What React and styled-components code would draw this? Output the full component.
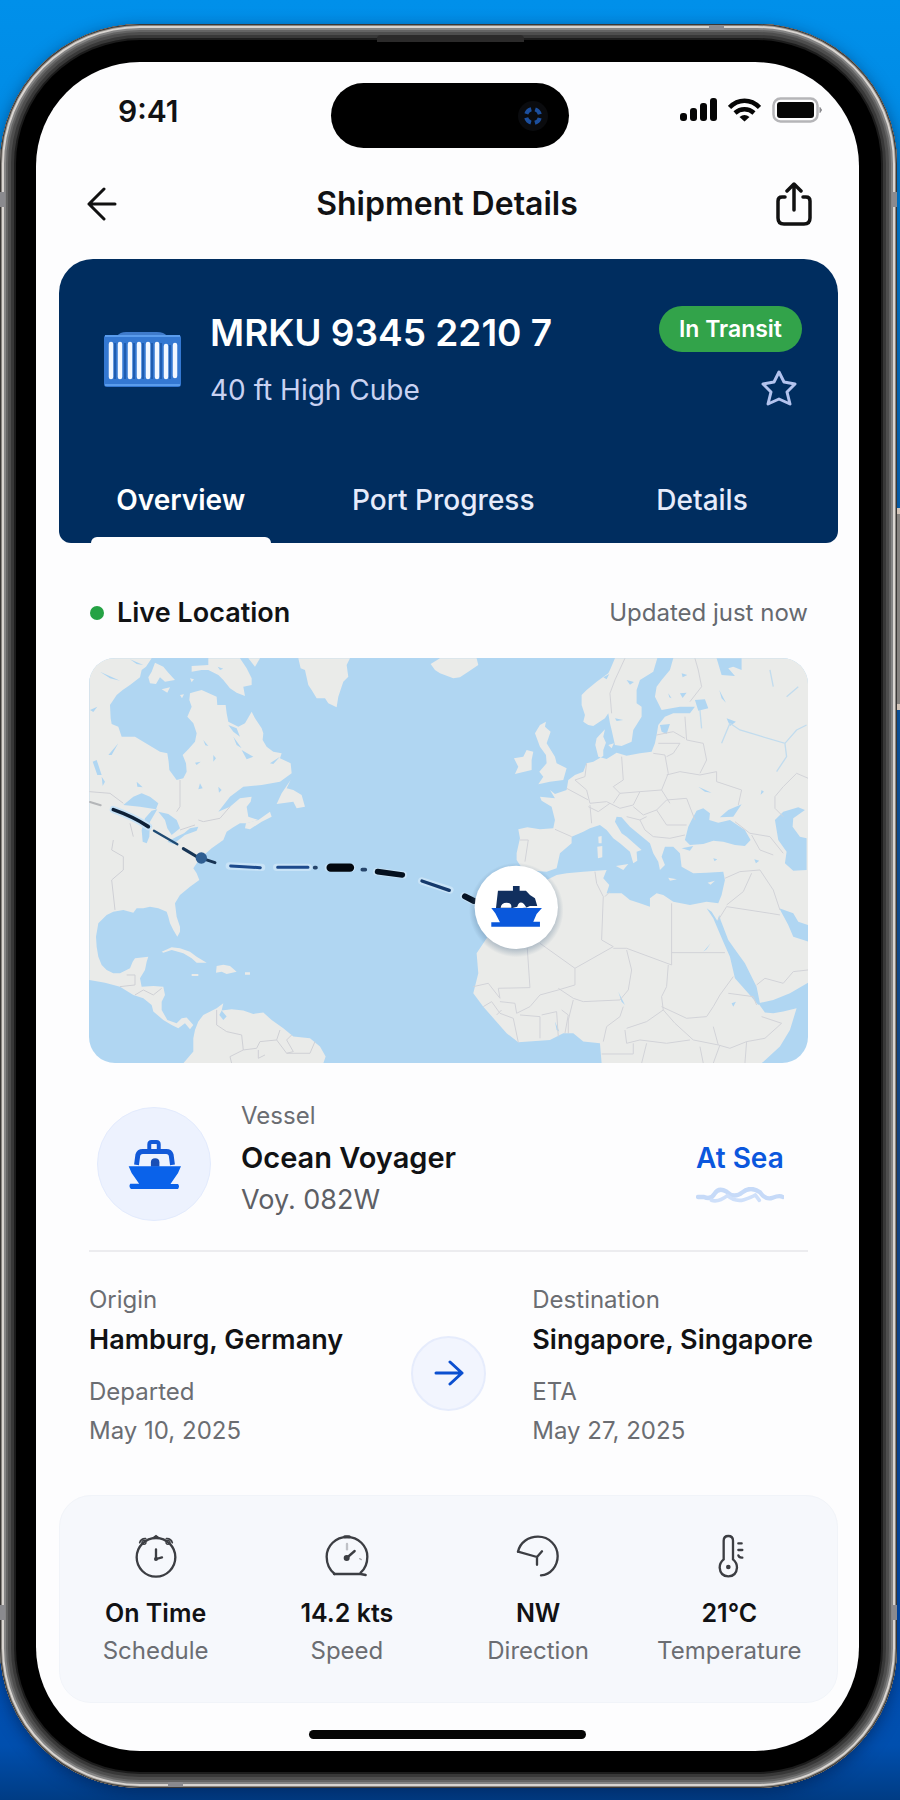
import { useState } from "react";
import styled, { createGlobalStyle } from "styled-components";

const GlobalStyle = createGlobalStyle`
  * {
    box-sizing: border-box;
  }
  body {
    margin: 0;
    font-family: Inter, "Liberation Sans", sans-serif;
    color: #111214;
    background: #0050b0;
  }
  button {
    border: none;
    padding: 0;
    background: none;
    font: inherit;
    color: inherit;
    cursor: pointer;
  }
  h1, h2, p {
    margin: 0;
  }
  svg {
    display: block;
  }
`;

const Page = styled.div`
  min-height: 100vh;
  padding: 24px 3px 12px 0;
  overflow: hidden;
  background: linear-gradient(
    180deg,
    #0090ea 0%,
    #0088e2 12%,
    #0a62b4 35%,
    #1a5090 65%,
    #0050b6 90%,
    #004fae 97%,
    #003c84 100%
  );
`;

const Phone = styled.div`
  position: relative;
  padding: 38px 38px 37px 36px;
  border-radius: 140px;
  background: #000;
  box-shadow:
    inset 0 0 0 1px #3a3836,
    inset 0 0 0 2px #8a8681,
    inset 0 0 0 4px #d9d5d1,
    inset 0 0 0 6px #858585,
    inset 0 0 0 8px #646464,
    inset 0 0 0 11px #4e4e4e,
    inset 0 0 0 14px #383838,
    inset 0 0 0 16px #1c1c1c,
    0 4px 16px rgba(0, 20, 60, 0.5);
`;

const Band = styled.span`
  position: absolute;
  background: #8a8a8e;
  width: ${(p) => (p.$side ? "5px" : "15px")};
  height: ${(p) => (p.$side ? "15px" : "5px")};
  top: ${(p) => p.$top};
  right: ${(p) => p.$right};
  bottom: ${(p) => p.$bottom};
  left: ${(p) => p.$left};
`;

const Speaker = styled.span`
  position: absolute;
  top: 11px;
  left: 42%;
  width: 147px;
  height: 7px;
  border-radius: 4px 4px 0 0;
  background: #2b2a2a;
`;

const SideButton = styled.span`
  position: absolute;
  top: 484px;
  right: -3px;
  width: 3px;
  height: 202px;
  border: solid #d3c4b8;
  border-width: 6px 0;
  background: #85827f;
`;

const Screen = styled.main`
  overflow: hidden;
  border-radius: 104px;
  background: #fdfdfe;
`;

const StatusBar = styled.div`
  height: 107px;
  padding: 0 36px 0 40px;
  display: grid;
  grid-template-columns: 1fr 238px 1fr;
  align-items: center;
`;

const Time = styled.span`
  padding: 0 0 9px 42px;
  font-size: 30px;
  font-weight: 600;
`;

const Island = styled.div`
  height: 65px;
  padding-right: 20px;
  border-radius: 33px;
  background: #000;
  display: flex;
  align-items: center;
  justify-content: flex-end;
`;

const StatusIcons = styled.div`
  display: flex;
  align-items: center;
  justify-content: flex-end;
  gap: 11px;
  padding-bottom: 11px;
`;

const Header = styled.header`
  height: 69px;
  margin-bottom: 21px;
  padding: 0 47px 0 50px;
  display: flex;
  align-items: center;
  justify-content: space-between;
`;

const Title = styled.h1`
  font-size: 32px;
  font-weight: 600;
`;

const Card = styled.section`
  margin: 0 21px 0 23px;
  padding-top: 47px;
  border-radius: 34px 34px 12px 12px;
  background: #002d5f;
  color: #fff;
`;

const CardTop = styled.div`
  display: flex;
  align-items: flex-start;
  padding: 0 36px 0 44px;
`;

const BoxIcon = styled.div`
  padding-top: 25px;
  margin-right: 28px;
`;

const CardText = styled.div`
  flex: 1;
`;

const Code = styled.h2`
  font-size: 37px;
  font-weight: 600;
  line-height: 54px;
`;

const BoxType = styled.p`
  font-size: 28px;
  line-height: 60px;
  color: #c9d2f2;
`;

const CardSide = styled.div`
  display: flex;
  flex-direction: column;
  align-items: flex-end;
  gap: 18px;
`;

const Badge = styled.span`
  padding: 0 20px;
  border-radius: 24px;
  background: #32a34a;
  font-size: 23px;
  font-weight: 600;
  line-height: 46px;
`;

const StarButton = styled.button`
  margin-right: 5px;
`;

const Tabs = styled.div`
  display: grid;
  grid-template-columns: 32fr 37fr 31fr;
  padding-right: 18px;
  margin-top: 29px;
`;

const Tab = styled.button`
  position: relative;
  height: 94px;
  padding-top: 8px;
  font-size: 28px;
  font-weight: ${(p) => (p.$active ? 600 : 500)};
  color: ${(p) => (p.$active ? "#fff" : "#e6ebfb")};

  &::after {
    content: "";
    display: ${(p) => (p.$active ? "block" : "none")};
    position: absolute;
    bottom: 0;
    left: calc(50% - 90px);
    width: 180px;
    height: 6px;
    border-radius: 6px 6px 0 0;
    background: #fdfdfe;
  }
`;

const Body = styled.div`
  padding: 54px 51px 0 53px;
`;

const SectionHead = styled.div`
  display: flex;
  align-items: center;
  margin-bottom: 29px;
  line-height: 32px;
`;

const Dot = styled.span`
  width: 14px;
  height: 14px;
  margin: 0 13px 0 1px;
  border-radius: 50%;
  background: #25a244;
`;

const SectionTitle = styled.h2`
  flex: 1;
  font-size: 27px;
  font-weight: 600;
`;

const Updated = styled.span`
  font-size: 24px;
  color: #66696f;
`;

const MapFrame = styled.div`
  overflow: hidden;
  border-radius: 26px;

  svg {
    width: 100%;
    height: auto;
  }
`;

const Vessel = styled.section`
  display: flex;
  align-items: flex-end;
  gap: 30px;
  padding: 32px 24px 29px 8px;
  border-bottom: 2px solid #ececef;
`;

const VesselIcon = styled.div`
  width: 114px;
  height: 114px;
  border: 1px solid #e3ebfd;
  border-radius: 50%;
  background: #edf2fe;
  display: flex;
  align-items: center;
  justify-content: center;
`;

const VesselText = styled.div`
  flex: 1;
  line-height: 42px;
`;

const Label = styled.p`
  font-size: 24px;
  color: #6b6d72;
`;

const Strong = styled.p`
  font-size: ${(p) => p.$size || 27}px;
  font-weight: 600;
  color: ${(p) => p.$color || "#111214"};
  white-space: nowrap;
`;

const Voyage = styled.p`
  font-size: 27px;
  color: #5d5f65;
`;

const Sea = styled.div`
  padding-bottom: 16px;
  line-height: 42px;

  svg {
    margin-top: 8px;
  }
`;

const Route = styled.section`
  display: flex;
  align-items: center;
  margin-right: -5px;
  padding: 28px 0 45px;
`;

const Port = styled.div`
  flex: ${(p) => (p.$grow ? 1 : "none")};
  line-height: 40px;
`;

const PortDates = styled.div`
  margin-top: 12px;
  line-height: 39px;
`;

const RouteArrow = styled.div`
  width: 75px;
  height: 75px;
  margin: 16px 46px 0 0;
  border: 2px solid #e6ecfc;
  border-radius: 50%;
  background: #f2f5fe;
  display: flex;
  align-items: center;
  justify-content: center;
`;

const Stats = styled.section`
  display: grid;
  grid-template-columns: repeat(4, 1fr);
  margin: 0 21px 0 23px;
  padding: 38px 12px 33px 0;
  border: 1px solid #f1f4f9;
  border-radius: 32px;
  background: #f6f8fc;
`;

const Stat = styled.div`
  display: flex;
  flex-direction: column;
  align-items: center;
  line-height: 37px;

  svg {
    margin-bottom: 17px;
  }
`;

const HomeBar = styled.div`
  width: 277px;
  height: 9px;
  margin: 27px auto 12px;
  border-radius: 5px;
  background: #050505;
`;

const Camera = () => (
  <svg width="32" height="32" viewBox="0 0 32 32" fill="none">
    <circle cx="16" cy="16" r="15" fill="#0a0b0e" />
    <circle cx="16" cy="16" r="7" stroke="#1c4f9e" strokeWidth="4" strokeDasharray="7 4" strokeDashoffset="-2" />
  </svg>
);

const Signal = () => (
  <svg width="37" height="24" viewBox="0 0 37 24" fill="#050505">
    <rect x="0" y="15" width="7" height="8" rx="3" />
    <rect x="10" y="10" width="7" height="13" rx="3" />
    <rect x="20" y="5" width="7" height="18" rx="3" />
    <rect x="30" y="0" width="7" height="23" rx="3" />
  </svg>
);

const Wifi = () => (
  <svg width="33" height="24" viewBox="0 0 33 24" fill="none" stroke="#050505" strokeWidth="4.500">
    <path d="M1.5 9.5c8.500-9 21.500-9 30 0" />
    <path d="M7 15c5.500-5 13.500-5 19 0" />
    <path d="M16.500 23.500l-5-4.500q5-4 10 0z" fill="#050505" stroke="none" />
  </svg>
);

const Battery = () => (
  <svg width="51" height="26" viewBox="0 0 51 26" fill="none">
    <rect x="1.500" y="1.500" width="44" height="23" rx="7" stroke="#b5b5b8" strokeWidth="2.500" />
    <rect x="5" y="5" width="37" height="16" rx="3" fill="#050505" />
    <path d="M48 10.500q3 2.500 0 5z" fill="#8b8b8f" stroke="#8b8b8f" />
  </svg>
);

const BackIcon = () => (
  <svg width="32" height="34" viewBox="0 0 32 34" fill="none" stroke="#111" strokeWidth="3" strokeLinecap="round" strokeLinejoin="round">
    <path d="M29 17H3M18 2L3 17l15 15" />
  </svg>
);

const ShareIcon = () => (
  <svg width="36" height="44" viewBox="0 0 36 44" fill="none" stroke="#111" strokeWidth="3.500" strokeLinecap="round" strokeLinejoin="round">
    <path d="M18 28V3M11 9l7-7 7 7" />
    <path d="M9 15H6q-4 0-4 4v17q0 6 6 6h20q6 0 6-6V19q0-4-4-4h-3" />
  </svg>
);

const ContainerIcon = () => (
  <svg width="79" height="57" viewBox="0 0 79 57">
    <path d="M14 5Q17 1 23 1H54Q61 1 64 5z" fill="#3f7bcb" />
    <rect x="1" y="4" width="77" height="52" rx="3" fill="#3478d2" />
    <path d="M2 5H77M2 54H77" stroke="#5a9cec" strokeWidth="2" />
    <path
      d="M8 13V46M17 13V46M27 13V46M36 13V46M45 13V46M54 13V46M63 15V46M72 14V45"
      stroke="#f2f7ff"
      strokeWidth="4.500"
      strokeLinecap="round"
    />
    <path d="M12 12V48M22 12V48M31 12V48M40 12V48M49 12V48M58 12V48M67 14V48" stroke="#1f5cb0" strokeWidth="2" />
  </svg>
);

const StarIcon = () => (
  <svg width="36" height="36" viewBox="0 0 36 36" fill="none" stroke="#b3c3ee" strokeWidth="3" strokeLinejoin="round">
    <path d="M18 2l5 10 11 2-8 8 3 12-11-5-11 5 3-12-8-8 11-2z" />
  </svg>
);

const ShipIcon = () => (
  <svg width="53" height="51" viewBox="203 205 162 156" fill="none">
    <path d="M268 242V222Q268 214 275 214H290Q297 214 297 222V242" stroke="#1259d8" strokeWidth="12" />
    <path d="M229 284L233 254Q236 243 248 243H320Q332 243 335 254L339 284" stroke="#1259d8" strokeWidth="15" />
    <path d="M273 290V276Q273 264 286 264T299 276V290z" fill="#1a4fb5" />
    <path d="M205 288H365L356 309L333 343H356Q362 350 356 358H212Q204 350 210 342H237L214 309z" fill="#0a62ea" />
  </svg>
);

const Waves = () => (
  <svg width="88" height="18" viewBox="766 350 264 54" fill="none" strokeLinecap="round" strokeLinejoin="round">
    <path d="M772 380H790Q810 390 822 370T858 364Q880 386 905 366T958 366Q975 390 996 382T1026 380" stroke="#c6daf8" strokeWidth="13" />
    <path d="M812 390Q835 396 860 376Q885 396 910 388T944 374L956 390" stroke="#cfe0fa" strokeWidth="11" />
  </svg>
);

const ArrowIcon = () => (
  <svg width="30" height="26" viewBox="0 0 30 26" fill="none" stroke="#0b4fd0" strokeWidth="3" strokeLinecap="round" strokeLinejoin="round">
    <path d="M2 13H28M16 2l12 11-12 11" />
  </svg>
);

const ClockIcon = () => (
  <svg width="44" height="44" viewBox="395 192 132 132" fill="none" stroke="#3c3e43" strokeWidth="7" strokeLinecap="round">
    <circle cx="461" cy="262" r="58" />
    <path d="M461 238V267L479 262" />
    <circle cx="461" cy="267" r="6" fill="#3c3e43" stroke="none" />
    <path d="M412 218Q416 205 430 206M510 218Q506 205 492 206" strokeWidth="5" />
    <path d="M450 205L461 197L472 205z" fill="#3c3e43" strokeWidth="4" />
    <circle cx="425" cy="217" r="6" strokeWidth="4" />
    <circle cx="497" cy="217" r="6" strokeWidth="4" />
  </svg>
);

const SpeedIcon = () => (
  <svg width="44" height="44" viewBox="977 194 132 132" fill="none" stroke="#3c3e43" strokeWidth="7" strokeLinecap="round">
    <path d="M1006 314Q982 294 982 262A61 59 0 0 1 1104 262Q1104 292 1084 310" />
    <path d="M1004 314H1084L1099 317" />
    <path d="M1043 224V240" stroke="#bfc1c6" />
    <path d="M1042 266L1066 245" strokeWidth="7" />
    <circle cx="1042" cy="266" r="9" fill="#3c3e43" stroke="none" />
    <path d="M1081 268L1086 271" stroke="#a9abb0" strokeWidth="4" />
    <path d="M1036 202H1050" strokeWidth="9" />
  </svg>
);

const DirectionIcon = () => (
  <svg width="44" height="44" viewBox="209 194 132 132" fill="none" stroke="#3c3e43" strokeWidth="7" strokeLinecap="round" strokeLinejoin="round">
    <path d="M215 247C222 218 247 202 275 202C309 202 334 229 334 260C334 290 313 316 284 318" />
    <path d="M215 247L272 263V286M272 263L287 246" />
  </svg>
);

const TempIcon = () => (
  <svg width="44" height="44" viewBox="774 194 132 132" fill="none" stroke="#3c3e43" strokeWidth="7" strokeLinecap="round">
    <path d="M824 270V214Q824 200 838 200T852 214V270Q864 280 864 295Q862 321 838 321T812 295Q812 280 824 270z" />
    <circle cx="838" cy="293" r="7" fill="#3c3e43" stroke="none" />
    <path d="M868 222H878M868 242H880M868 258Q870 266 880 265" />
  </svg>
);

// land, water and border outlines share one grid; the old world starts 1080 units in
const WEST_LAND = [
  "M28 205H215L198 230 185 240 180 262 150 285 128 300 110 315 90 345 92 385 95 402 115 410 125 440 165 440 190 455 215 470 240 485 262 490 266 515 268 540 290 570 310 565 320 545 318 520 308 495 325 478 345 455 350 430 340 400 322 380 335 350 328 330 330 310 345 305 365 300 410 320 412 345 437 345 440 370 445 395 475 410 495 400 515 365 525 385 545 415 550 430 548 450 560 470 580 485 605 490 600 505 632 520 635 550 600 575 545 585 490 590 450 620 415 665 450 650 480 625 515 620 512 635 500 650 505 680 535 690 500 700 480 700 460 712 440 725 430 750 395 775 378 790 365 800 350 820 340 835 350 850 358 870 330 890 300 915 285 940 290 980 300 1010 300 1025 292 1040 280 1020 270 1000 265 980 260 965 235 955 210 950 190 955 170 955 160 968 130 960 100 965 80 975 55 1000 48 1040 50 1070 55 1100 65 1125 80 1140 100 1150 120 1150 150 1135 158 1115 165 1105 205 1100 200 1115 195 1140 180 1165 185 1190 220 1188 250 1190 255 1215 245 1235 245 1260 262 1290 290 1300 305 1285 320 1283 340 1305 330 1318 315 1300 295 1315 275 1305 250 1290 220 1265 215 1245 190 1225 160 1215 120 1190 75 1178 28 1170Z",
  "M225 218L250 230 265 248 285 270 255 275 240 262 228 282 210 280 205 262 215 245Z",
  "M385 205H480L500 235 515 265 515 285 490 290 495 318 470 308 450 295 430 270 415 255 385 240 365 240 335 245V228L385 225Z",
  "M505 205H540L525 230Z",
  "M655 205H810L800 225 805 260 790 275 785 290 775 320 770 352 745 340 735 325 710 325 695 300 685 285 675 240 662 235Z",
  "M632 570L620 595 640 600 665 615 675 650 650 655 640 635 590 642 605 610Z",
  "M570 665L575 680 545 695 510 718 495 715 498 700 535 690Z",
  "M245 1085L275 1072 300 1075 330 1085 350 1100 380 1118 350 1118 335 1105 310 1090 275 1080 250 1088Z",
  "M410 1128L430 1124 450 1128 470 1145 440 1152 425 1145 408 1148Z",
  "M335 1152H355V1158H335ZM495 1147H510V1154H495ZM245 298L270 292 262 308ZM300 315L312 313 306 325ZM330 265L342 268 335 277Z",
  "M310 1420L340 1385 340 1345 345 1320 355 1295 370 1275 410 1255 430 1240 425 1262 455 1258 490 1262 520 1272 550 1268 575 1290 610 1315 640 1340 690 1345 720 1370 737 1400 730 1420Z",
];

const EAST_LAND = [
  "M525 205L510 240 505 250 470 275 440 300 425 315 425 345 435 375 430 395 445 405 460 408 495 385 505 370 510 400 515 420 525 465 545 468 575 455 580 420 605 380 605 350 590 340 590 300 600 270 640 245 652 205H700L690 240 665 270 650 290 645 320 665 360 720 350 765 350 750 370 700 370 675 380 655 405 650 435 645 460 635 485 600 490 560 497 530 488 500 507 475 500 466 465 470 445 495 418 490 440 498 458 490 480 490 498 460 515 440 520 430 545 405 555 385 570 380 600 345 612 330 600 345 625 300 620 305 632 335 650 345 690 340 715 300 718 262 712 235 718 240 745 230 790 230 810 250 840 320 845 350 835 360 790 395 760 395 740 430 725 450 715 480 705 500 720 520 745 540 760 570 785 580 820 592 812 590 785 605 780 560 740 545 730 525 695 530 680 545 682 570 710 600 735 630 760 640 790 655 815 660 840 675 825 665 800 675 770 700 770 720 790 725 830 760 850 800 848 850 845 855 870 845 915 835 940 800 935 750 945 700 935 670 915 650 910 630 925 630 950 600 940 570 930 545 910 500 910 508 885 490 865 500 840 430 845 380 850 350 855 320 870 250 900 210 960 150 1030 110 1090 115 1150 100 1210 130 1250 165 1290 200 1330 235 1357 330 1350 370 1330 400 1330 430 1355 480 1360 485 1420H965L1020 1370 1050 1320 1070 1255 1030 1265 1000 1270 975 1268 955 1240 1000 1230 1050 1210 1105 1178V205Z",
  "M-28 222L0 205H110L115 225 85 245 60 262 40 265 0 250 -15 240Z",
  "M300 405L318 395 315 410 332 425 320 460 345 500 350 520 380 535 370 570 330 575 295 583 310 560 298 545 320 520 318 495 300 470 285 430Z",
  "M260 480L280 485 275 510 275 540 225 552 235 530 222 505 250 500Z",
  "M475 740L485 738V760H476ZM472 770L487 768V802L474 805ZM528 828L565 822 550 840ZM685 863L711 868 690 872ZM803 878L825 872 812 884ZM505 465L522 460 515 475Z",
];

const WEST_WATER = [
  "M130 645L160 620 185 610 210 620 235 640 228 658 180 650Z",
  "M188 755L185 720 195 685 215 662 232 658 210 695 208 740 200 760Z",
  "M235 665L265 672 290 690 300 715 275 735 262 715 255 690Z",
  "M262 755L290 740 312 730 330 715 355 710 350 722 315 735 280 762Z",
  "M38 515L50 510 65 555 52 555ZM65 560L75 575 68 588ZM30 360L52 350 40 366ZM85 495L115 460 95 495ZM150 208L190 225 170 222ZM60 245L120 272 90 265ZM345 518L362 515 350 525ZM460 440L485 475 470 465ZM485 480L520 500 500 508ZM415 590L425 600 417 608ZM370 450L385 468 376 466ZM445 405L470 415 480 440 460 425ZM170 575L188 592 172 590ZM570 520L600 500 580 522ZM425 1262L440 1280 430 1290 418 1275ZM400 495L408 505 400 515ZM360 580L368 595 355 598ZM413 230L430 236 420 240Z",
];

const EAST_WATER = [
  "M735 750L745 710 755 690 770 662 790 655 810 670 808 690 835 698 870 690 915 720 932 750 915 768 885 765 850 755 820 752 790 762 750 765Z",
  "M840 682L865 660 905 643 880 680Z",
  "M725 775L760 768 750 782Z",
  "M1005 690L1030 665 1075 652 1095 660 1060 685 1058 710 1080 740 1100 745V840L1060 842 1035 820 1040 785 1015 750Z",
  "M800 955L820 985 850 1055 870 1100 885 1165 925 1210 955 1245 960 1240 950 1190 915 1120 890 1085 865 1050 842 990 838 975 832 992 815 965Z",
  "M1018 955L1060 970 1075 995 1105 1005V1055L1060 1040 1045 1005Z",
  "M830 205H905V240L880 230 865 235 885 258 845 255Z",
  "M765 330L795 328 805 355 775 362ZM660 405L690 402 680 432 665 425ZM838 300L858 338 845 325ZM560 270L582 276 570 284ZM525 385L550 390 530 393ZM790 1085L812 1060 800 1078ZM535 1205L555 1245 545 1235ZM775 590L815 608 795 605ZM720 310L740 308 728 324ZM685 310L695 325 688 322ZM725 250L742 255 728 262ZM860 385L888 395 870 408ZM875 1240L888 1235 880 1250ZM345 1295L358 1325 350 1320ZM965 600L972 605 962 614ZM490 262L508 252 500 268ZM820 805L832 808 824 814ZM943 808L958 812 948 820Z",
];

const WEST_BORDERS =
  "M28 605L90 610 130 640M355 690L370 695 420 685 450 650M300 570V650L290 665M345 705L300 720M100 750L95 780 130 800V840L95 870 105 960M140 1155L165 1155V1185L120 1190M165 1215L190 1200 220 1215 245 1195M410 1260L410 1305 440 1325 485 1335 490 1380 450 1400 455 1420M490 1380L530 1375 540 1355 590 1350 600 1320M535 1380V1405L555 1395M590 1350L620 1390 640 1385 620 1350 635 1335M620 1390L690 1390 705 1355M150 700L160 740";

const EAST_BORDERS =
  "M555 205L525 270 510 310 515 370M765 205L775 240 785 290 750 335M735 380L740 450 790 460 800 510 780 550M650 435L700 425 735 445M655 460L720 460 700 490 680 500M640 490L675 495 685 550 665 600 690 640M680 555L720 545 780 555 830 545 830 575 905 600 895 645M545 500L550 570 520 590 540 610 600 605 665 600M440 520L435 560 405 570 440 600 450 640 500 635 540 655 580 645 600 605M380 595L445 630M450 645L455 700M540 610L520 640M580 650L610 675 650 660 680 630 740 625 765 690M650 660L680 705 740 705M560 680L600 690 615 720 640 740 690 745 735 735M345 718L395 740M240 750H265L255 815M600 690L620 680M445 650L475 665 510 640M1105 565L1070 550 1030 590 1005 620 1005 655 1030 680M885 695L930 730 990 740 1030 790M935 735L960 780 1000 795M855 865L900 845 960 840 1000 900 1020 960M860 945L910 905 935 850M860 950L990 970 1020 975M835 990L860 950M465 845L470 880 490 920 485 1050 520 1070 405 1135 300 1060M495 920L510 905M695 940V1125L560 1075 520 1075M695 1088H855M560 1080L575 1140 565 1200 540 1230 430 1235 400 1225 355 1195M685 1125L680 1190 665 1220 670 1260 620 1295 560 1315M100 1190L145 1180 180 1225 175 1195 270 1193 262 1075M355 1200L405 1185V1135M355 1200L300 1215 270 1250 230 1270 225 1240 180 1235M130 1250L155 1235 180 1270 220 1285 235 1357M170 1275L185 1260M240 1275L300 1280 300 1345M305 1275L350 1265 355 1340M365 1260L385 1275 375 1330M400 1230L385 1290 385 1330M490 1355L500 1310 540 1280 550 1250M555 1320L560 1360 600 1350 680 1360 750 1350M485 1392H580V1360M670 1260L705 1300 760 1350 835 1365 870 1375 920 1355 975 1345 1025 1300 965 1280M665 1250L740 1285 800 1280 820 1250 840 1215 880 1160M820 1310L835 1365M780 1370L790 1420M620 1360L605 1420M840 1365L820 1420M920 1355L915 1420M950 1185L975 1165 1030 1180 1060 1145 1105 1140M865 1210L940 1220 950 1245";

const RIVERS =
  "M870 400L900 420 950 435 1035 460 1070 420 1100 405M1035 460L1040 500 1010 545M870 400L845 460M990 240L1000 290M1040 320L1075 290M780 360L785 415";

const WorldMap = () => (
  <svg viewBox="0 0 719 405" role="img" aria-label="Vessel route over the Atlantic">
    <defs>
      <radialGradient id="markerShadow">
        <stop offset="0.8" stopColor="#4a6a88" stopOpacity="0.4" />
        <stop offset="1" stopColor="#4a6a88" stopOpacity="0" />
      </radialGradient>
    </defs>
    <rect width="719" height="405" fill="#b0d6f2" />
    <g transform="translate(-9 -68) scale(0.3333)">
      <g fill="#eaebe9">
        {WEST_LAND.map((d) => (
          <path key={d} d={d} />
        ))}
      </g>
      <g fill="#b0d6f2">
        {WEST_WATER.map((d) => (
          <path key={d} d={d} />
        ))}
      </g>
      <path d={WEST_BORDERS} fill="none" stroke="#cfd0d5" strokeWidth="3" />
      <g transform="translate(1080 0)">
        <g fill="#eaebe9">
          {EAST_LAND.map((d) => (
            <path key={d} d={d} />
          ))}
        </g>
        <g fill="#b0d6f2">
          {EAST_WATER.map((d) => (
            <path key={d} d={d} />
          ))}
        </g>
        <path d={EAST_BORDERS} fill="none" stroke="#d2d3d8" strokeWidth="3" strokeLinejoin="round" />
        <path d={RIVERS} fill="none" stroke="#c2dcee" strokeWidth="4" />
      </g>
      <g fill="none" strokeLinecap="round">
        <path
          d="M100 659Q160 680 205 710M448 828L545 832M590 832H685M745 833H815M890 845L970 855M1025 873L1110 900M1152 918L1182 935"
          stroke="#c8e3f7"
          strokeWidth="22"
        />
        <path d="M30 636L62 646" stroke="#b4b6b8" strokeWidth="6" />
        <path d="M100 659Q160 680 205 710" stroke="#0d2037" strokeWidth="11" />
        <path d="M222 722L292 763" stroke="#1f4a72" strokeWidth="7" />
        <path d="M310 776L350 800L405 818" stroke="#173454" strokeWidth="9" />
        <circle cx="364" cy="804" r="17" fill="#2f5e91" />
        <path d="M452 828Q500 831 541 833M593 832H684" stroke="#1c4a8c" strokeWidth="9" />
        <path d="M704 833H708M847 839H856" stroke="#26456b" strokeWidth="11" />
        <path d="M752 833H810" stroke="#03080f" strokeWidth="25" />
        <path d="M893 845L967 855" stroke="#04101e" strokeWidth="17" />
        <path d="M1026 873L1108 901" stroke="#15396b" strokeWidth="10" />
        <path d="M1155 919L1182 933" stroke="#061325" strokeWidth="18" />
      </g>
      <circle cx="1309" cy="960" r="142" fill="url(#markerShadow)" />
      <circle cx="1309" cy="952" r="125" fill="#fff" />
      <g transform="translate(1080 0)">
        <path d="M219 888H239V902H258L270 915 285 925 292 948H270L255 955 240 948 215 955H168L174 902H219Z" fill="#112f5e" />
        <path d="M182 953Q184 938 200 938T214 953ZM232 950Q238 930 252 942L260 953H232Z" fill="#fff" />
        <path d="M154 954H306L290 972 280 995H300V1010H154V997H180L166 970Z" fill="#0a58dc" />
      </g>
    </g>
  </svg>
);

const tabs = ["Overview", "Port Progress", "Details"];

const stats = [
  { icon: <ClockIcon />, value: "On Time", label: "Schedule" },
  { icon: <SpeedIcon />, value: "14.2 kts", label: "Speed" },
  { icon: <DirectionIcon />, value: "NW", label: "Direction" },
  { icon: <TempIcon />, value: "21°C", label: "Temperature" },
];

const App = () => {
  const [active, setActive] = useState("Overview");

  return (
    <Page>
      <GlobalStyle />
      <Phone>
        <Speaker />
        <Band $top="1px" $left="79%" />
        <Band $bottom="1px" $left="168px" />
        <Band $side $top="168px" $left="0" />
        <Band $side $top="168px" $right="0" />
        <Band $side $bottom="168px" $left="0" />
        <Band $side $bottom="168px" $right="0" />
        <SideButton />
        <Screen>
          <StatusBar>
            <Time>9:41</Time>
            <Island>
              <Camera />
            </Island>
            <StatusIcons>
              <Signal />
              <Wifi />
              <Battery />
            </StatusIcons>
          </StatusBar>
          <Header>
            <button aria-label="Back">
              <BackIcon />
            </button>
            <Title>Shipment Details</Title>
            <button aria-label="Share">
              <ShareIcon />
            </button>
          </Header>
          <Card>
            <CardTop>
              <BoxIcon>
                <ContainerIcon />
              </BoxIcon>
              <CardText>
                <Code>MRKU 9345 2210 7</Code>
                <BoxType>40 ft High Cube</BoxType>
              </CardText>
              <CardSide>
                <Badge>In Transit</Badge>
                <StarButton aria-label="Add to favourites">
                  <StarIcon />
                </StarButton>
              </CardSide>
            </CardTop>
            <Tabs role="tablist">
              {tabs.map((tab) => (
                <Tab
                  key={tab}
                  role="tab"
                  aria-selected={tab === active}
                  $active={tab === active}
                  onClick={() => setActive(tab)}
                >
                  {tab}
                </Tab>
              ))}
            </Tabs>
          </Card>
          <Body>
            <SectionHead>
              <Dot />
              <SectionTitle>Live Location</SectionTitle>
              <Updated>Updated just now</Updated>
            </SectionHead>
            <MapFrame>
              <WorldMap />
            </MapFrame>
            <Vessel>
              <VesselIcon>
                <ShipIcon />
              </VesselIcon>
              <VesselText>
                <Label>Vessel</Label>
                <Strong $size={29}>Ocean Voyager</Strong>
                <Voyage>Voy. 082W</Voyage>
              </VesselText>
              <Sea>
                <Strong $size={28} $color="#0b57dd">
                  At Sea
                </Strong>
                <Waves />
              </Sea>
            </Vessel>
            <Route>
              <Port $grow>
                <Label>Origin</Label>
                <Strong>Hamburg, Germany</Strong>
                <PortDates>
                  <Label>Departed</Label>
                  <Label>May 10, 2025</Label>
                </PortDates>
              </Port>
              <RouteArrow>
                <ArrowIcon />
              </RouteArrow>
              <Port>
                <Label>Destination</Label>
                <Strong>Singapore, Singapore</Strong>
                <PortDates>
                  <Label>ETA</Label>
                  <Label>May 27, 2025</Label>
                </PortDates>
              </Port>
            </Route>
          </Body>
          <Stats>
            {stats.map((stat) => (
              <Stat key={stat.label}>
                {stat.icon}
                <Strong $size={25}>{stat.value}</Strong>
                <Label>{stat.label}</Label>
              </Stat>
            ))}
          </Stats>
          <HomeBar />
        </Screen>
      </Phone>
    </Page>
  );
};

export default App;
